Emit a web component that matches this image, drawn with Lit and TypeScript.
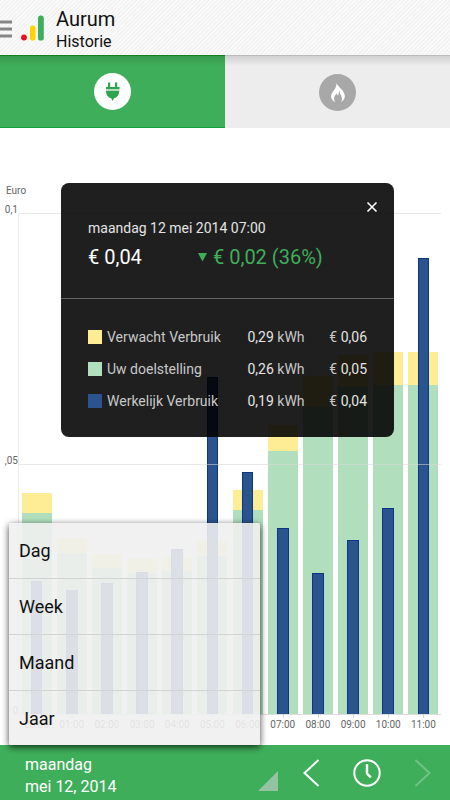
import { LitElement, html, css } from "lit";
import { customElement, property, state } from "lit/decorators.js";
import { classMap } from "lit/directives/class-map.js";

interface Hour {
  label: string;
  expected: number;
  target: number;
  actual: number;
}

// Values are a share of the axis maximum, in percent.
const HOURS: Hour[] = [
  { label: "00:00", expected: 44.2, target: 40.2, actual: 26.6 },
  { label: "01:00", expected: 35.3, target: 32.2, actual: 24.8 },
  { label: "02:00", expected: 32, target: 29.2, actual: 26.2 },
  { label: "03:00", expected: 31, target: 28.2, actual: 28.4 },
  { label: "04:00", expected: 31.4, target: 28.6, actual: 33 },
  { label: "05:00", expected: 34.6, target: 31.6, actual: 67.4 },
  { label: "06:00", expected: 44.8, target: 40.8, actual: 48.4 },
  { label: "07:00", expected: 57.9, target: 52.7, actual: 37.2 },
  { label: "08:00", expected: 67.6, target: 61.4, actual: 28.2 },
  { label: "09:00", expected: 71.9, target: 65.4, actual: 34.8 },
  { label: "10:00", expected: 72.4, target: 65.8, actual: 41.3 },
  { label: "11:00", expected: 72.4, target: 65.8, actual: 91.2 },
];

const reset = css`
  * {
    box-sizing: border-box;
  }
  button {
    margin: 0;
    padding: 0;
    border: 0;
    background: none;
    color: inherit;
    font: inherit;
    text-align: left;
    cursor: pointer;
  }
  svg {
    display: block;
  }
`;

@customElement("usage-chart")
export class UsageChart extends LitElement {
  static styles = [
    reset,
    css`
      :host {
        display: flex;
        flex: 1;
        padding: 86px 9px 30px 0;
        color: #666;
        font-size: 10px;
        line-height: 12px;
      }
      .scale {
        flex: 0 0 18px;
        position: relative;
      }
      .unit {
        position: absolute;
        left: 6px;
        top: -29px;
      }
      .tick {
        position: absolute;
        right: 0;
      }
      .tick.max {
        top: -10px;
      }
      .tick.half {
        top: calc(50% - 10px);
      }
      .tick.zero {
        bottom: -2px;
      }
      .plot {
        flex: 1;
        position: relative;
        display: grid;
        grid-template-columns: repeat(12, 1fr);
        border-left: 1px solid #ebebeb;
        border-bottom: 1px solid #dcdcdc;
      }
      .line {
        position: absolute;
        left: 0;
        right: 0;
        height: 1px;
        background: rgba(215, 215, 215, 0.55);
      }
      .line.max {
        top: -1px;
      }
      .line.half {
        top: 50%;
      }
      .hour {
        position: relative;
        display: grid;
        align-items: end;
        justify-items: center;
      }
      .bar {
        grid-area: 1 / 1;
        width: 85%;
      }
      .expected {
        background: #ffed96;
      }
      .target {
        background: #b1dfbd;
      }
      .actual {
        width: 33%;
        background: #2b548e;
        border: 1px solid #0b3585;
        border-bottom: 0;
      }
      .label {
        position: absolute;
        top: 100%;
        padding-top: 5px;
      }
      .label::before {
        content: "";
        position: absolute;
        left: 50%;
        top: 0;
        width: 1px;
        height: 4px;
        background: #d4d4d4;
      }
    `,
  ];

  @property({ attribute: false }) hours: Hour[] = [];

  render() {
    return html`
      <div class="scale">
        <span class="unit">Euro</span>
        <span class="tick max">0,1</span>
        <span class="tick half">,05</span>
        <span class="tick zero">0</span>
      </div>
      <div class="plot">
        ${this.hours.map(
          (h) => html`<div class="hour">
            <div class="bar expected" style="height:${h.expected}%"></div>
            <div class="bar target" style="height:${h.target}%"></div>
            <div class="bar actual" style="height:${h.actual}%"></div>
            <span class="label">${h.label}</span>
          </div>`
        )}
        <div class="line max"></div>
        <div class="line half"></div>
      </div>
    `;
  }
}

@customElement("usage-detail")
export class UsageDetail extends LitElement {
  static styles = [
    reset,
    css`
      :host {
        display: block;
        border-radius: 8px;
        background: rgba(0, 0, 0, 0.88);
        color: #e4e4e4;
        font-size: 14px;
        line-height: 20px;
        position: relative;
      }
      .close {
        position: absolute;
        top: 14px;
        right: 12px;
        padding: 4px;
      }
      .close svg {
        width: 12px;
        height: 12px;
      }
      .summary {
        padding: 35px 27px 28px;
        border-bottom: 1px solid #626262;
      }
      h2 {
        margin: 0 0 6px;
        font-size: 14px;
        font-weight: 400;
        line-height: 20px;
      }
      .amounts {
        display: flex;
        align-items: center;
        font-size: 20px;
        line-height: 26px;
        color: #fff;
      }
      .total {
        flex: 0 0 110px;
      }
      .saving {
        display: flex;
        align-items: center;
        gap: 6px;
        color: #3fae5a;
      }
      .saving svg {
        width: 9px;
        height: 9px;
      }
      table {
        width: 100%;
        border-collapse: collapse;
        margin: 22px 0 20px;
      }
      th,
      td {
        height: 32px;
        padding: 0;
        font-weight: 400;
        text-align: left;
        white-space: nowrap;
      }
      th {
        width: 56%;
        padding-left: 27px;
        color: #c8c8c8;
      }
      .cost {
        padding-right: 27px;
        text-align: right;
      }
      .unit {
        color: #c8c8c8;
      }
      .key {
        display: flex;
        align-items: center;
        gap: 5px;
      }
      .swatch {
        width: 14px;
        height: 14px;
      }
      .expected {
        background: #ffed96;
      }
      .target {
        background: #b1dfbd;
      }
      .actual {
        background: #2b548e;
      }
    `,
  ];

  private rows = [
    { kind: "expected", name: "Verwacht Verbruik", use: "0,29", cost: "0,06" },
    { kind: "target", name: "Uw doelstelling", use: "0,26", cost: "0,05" },
    { kind: "actual", name: "Werkelijk Verbruik", use: "0,19", cost: "0,04" },
  ];

  render() {
    return html`
      <button
        class="close"
        aria-label="Sluiten"
        @click=${() => this.dispatchEvent(new CustomEvent("close"))}
      >
        <svg viewBox="0 0 12 12" fill="none" stroke="#fff" stroke-width="1.6">
          <path d="M1.5 1.5l9 9M10.5 1.5l-9 9" />
        </svg>
      </button>
      <div class="summary">
        <h2>maandag 12 mei 2014 07:00</h2>
        <div class="amounts">
          <span class="total">€ 0,04</span>
          <span class="saving">
            <svg viewBox="0 0 9 9" fill="currentColor"><path d="M0 0h9L4.500 8.500z" /></svg>
            <span>€ 0,02 (36%)</span>
          </span>
        </div>
      </div>
      <table>
        ${this.rows.map(
          (r) => html`<tr>
            <th scope="row">
              <span class="key"><span class="swatch ${r.kind}"></span>${r.name}</span>
            </th>
            <td>${r.use} <span class="unit">kWh</span></td>
            <td class="cost"><span class="unit">€</span> ${r.cost}</td>
          </tr>`
        )}
      </table>
    `;
  }
}

@customElement("app-root")
export class AppRoot extends LitElement {
  static styles = [
    reset,
    css`
      :host {
        display: flex;
        flex-direction: column;
        min-height: 100vh;
        background: #fff;
        font-family: Roboto, "Liberation Sans", sans-serif;
        overflow: hidden;
      }
      header {
        display: flex;
        align-items: center;
        height: 55px;
        background: repeating-linear-gradient(
          135deg,
          #f2f2f2 0,
          #f2f2f2 1px,
          #fafafa 2px,
          #fafafa 3px
        );
        color: #111;
      }
      .drawer {
        padding-top: 2px;
      }
      .drawer svg {
        width: 12px;
        height: 18px;
      }
      .logo {
        width: 24px;
        height: 26px;
        margin: 0 11px 0 9px;
      }
      h1,
      p {
        margin: 0;
        font-weight: 400;
      }
      h1 {
        font-size: 20px;
        line-height: 23px;
      }
      p {
        font-size: 16px;
        line-height: 21px;
      }
      .titles {
        padding-top: 4px;
      }
      .tabs {
        display: grid;
        grid-template-columns: 1fr 1fr;
        height: 73px;
      }
      .tab {
        display: flex;
        align-items: center;
        justify-content: center;
        border-top: 1px solid #bbb;
        background: linear-gradient(rgba(0, 0, 0, 0.12), transparent 10px) #ededed;
      }
      .tab.on {
        border-top-color: #14821f;
        border-bottom: 1px solid #12a13c;
        background-color: #3fae5a;
      }
      .tab svg {
        width: 37px;
        height: 37px;
      }
      main {
        flex: 1;
        position: relative;
        display: flex;
      }
      usage-detail {
        position: absolute;
        top: 55px;
        left: 61px;
        right: 56px;
      }
      .menu {
        position: absolute;
        left: 9px;
        bottom: 0;
        width: 251px;
        background: rgba(240, 240, 240, 0.9);
        border-radius: 2px;
        box-shadow: 0 2px 7px rgba(0, 0, 0, 0.75);
      }
      .menu button {
        display: block;
        width: 100%;
        height: 56px;
        padding: 0 10px;
        border-bottom: 1px solid #d2d4d4;
        color: #111;
        font-size: 18px;
      }
      .menu button:last-child {
        height: 54px;
        border-bottom: 0;
      }
      footer {
        display: flex;
        align-items: center;
        height: 55px;
        background: #3fae5a;
        color: #fff;
      }
      .date {
        flex: 1;
        display: flex;
        align-items: flex-end;
        justify-content: space-between;
        padding-left: 25px;
        padding-top: 7px;
        font-size: 16px;
        line-height: 22px;
      }
      .corner {
        width: 20px;
        height: 20px;
        margin-bottom: 7px;
      }
      .nav {
        flex: 0 0 auto;
        display: flex;
        align-items: center;
        gap: 33px;
        padding: 0 18px 0 24px;
      }
      .nav svg {
        height: 28px;
      }
      .chevron svg {
        width: 18px;
      }
      .clock svg {
        width: 28px;
      }
      .chevron:disabled {
        opacity: 0.25;
      }
    `,
  ];

  @state() private source = "power";
  @state() private detailOpen = true;
  @state() private menuOpen = true;

  render() {
    return html`
      <header>
        <button class="drawer" aria-label="Menu">
          <svg viewBox="0 0 12 18" fill="#858588">
            <path d="M0 0.500h12v3H0zM0 7.500h12v3H0zM0 14.500h12v3H0z" />
          </svg>
        </button>
        <svg class="logo" viewBox="0 0 24 26">
          <circle cx="3" cy="22.500" r="2.900" fill="#e8101c" />
          <rect x="9" y="10.500" width="5.500" height="15" rx="2.600" fill="#ffd400" />
          <rect x="17" y="0.500" width="5.800" height="25" rx="2.600" fill="#3fae5a" />
        </svg>
        <div class="titles">
          <h1>Aurum</h1>
          <p>Historie</p>
        </div>
      </header>
      <nav class="tabs">
        <button
          class=${classMap({ tab: true, on: this.source === "power" })}
          aria-label="Elektriciteit"
          @click=${() => (this.source = "power")}
        >
          <svg viewBox="0 0 37 37">
            <circle cx="18.500" cy="18.500" r="18.500" fill="#fff" />
            <path
              fill="#2fa54d"
              d="M14 9.500h2.200v4.500H14zM21 9.500h2.200v4.500H21zM12 14h13.500v2H12zM12 18h13.200c0 4-2 6.500-5.200 7.300L18.600 28l-1.400-2.700C14 24.500 12 22 12 18z"
            />
            <path fill="#b5d9bd" d="M12 16h13.500v2H12z" />
          </svg>
        </button>
        <button
          class=${classMap({ tab: true, on: this.source === "gas" })}
          aria-label="Gas"
          @click=${() => (this.source = "gas")}
        >
          <svg viewBox="0 0 37 37">
            <circle cx="18.500" cy="18.500" r="18.500" fill="#a8a8a8" />
            <path
              fill="#fff"
              d="M17.500 9.300c2 4 8.300 7.500 8.300 13 0 2.800-1.600 4.900-3.900 5.700 1-1.400 1.300-2.700.9-4.600-.4-2-2-3.700-2.500-7-.7 1.500-.5 3.500-1.200 5.300-.7-.7-1-1.500-1.100-2.500-1.500 1.500-2.900 3-2.900 5.200 0 1.500.5 2.700 1.300 3.600-2.500-.6-4.300-2.600-4.300-5.500 0-5 5.400-6.500 5.400-13.200z"
            />
          </svg>
        </button>
      </nav>
      <main>
        <usage-chart .hours=${HOURS}></usage-chart>
        ${this.detailOpen
          ? html`<usage-detail @close=${() => (this.detailOpen = false)}></usage-detail>`
          : null}
        ${this.menuOpen
          ? html`<div class="menu">
              ${["Dag", "Week", "Maand", "Jaar"].map(
                (period) =>
                  html`<button @click=${() => (this.menuOpen = false)}>${period}</button>`
              )}
            </div>`
          : null}
      </main>
      <footer>
        <button class="date" @click=${() => (this.menuOpen = !this.menuOpen)}>
          <span>maandag<br />mei 12, 2014</span>
          <svg class="corner" viewBox="0 0 20 20" fill="#93c3a0"><path d="M20 0v20H0z" /></svg>
        </button>
        <div class="nav">
          <button class="chevron" aria-label="Vorige">
            <svg viewBox="0 0 18 28" fill="none" stroke="#fff" stroke-width="2">
              <path d="M16.500 1L2.500 14l14 13" />
            </svg>
          </button>
          <button class="clock" aria-label="Nu">
            <svg viewBox="0 0 28 28" fill="none" stroke="#fff" stroke-width="2">
              <circle cx="14" cy="14" r="12.700" />
              <path d="M14 5v9.500l3.800 3.800" stroke-width="2.400" />
            </svg>
          </button>
          <button class="chevron" aria-label="Volgende" disabled>
            <svg viewBox="0 0 18 28" fill="none" stroke="#fff" stroke-width="2">
              <path d="M1.500 1l14 13-14 13" />
            </svg>
          </button>
        </div>
      </footer>
    `;
  }
}
